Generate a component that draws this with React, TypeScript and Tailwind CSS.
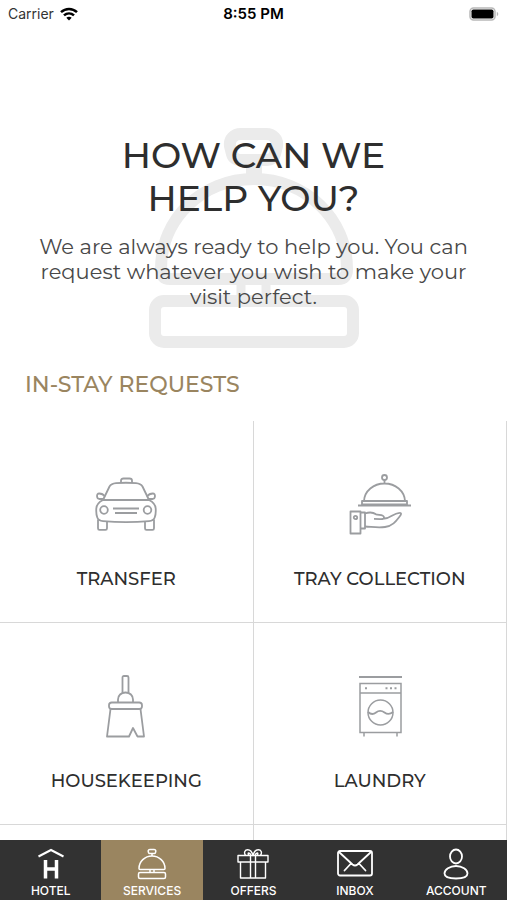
import React from 'react';

type IconProps = { className?: string };

const WifiIcon: React.FC<IconProps> = ({ className }) => (
  <svg viewBox="0 0 18 14" className={className} fill="none" stroke="currentColor" strokeWidth="2.500" aria-hidden="true">
    <path d="M1 5.2c4.600-4.300 11.400-4.300 16 0" />
    <path d="M4 8.400c2.900-2.700 7.100-2.700 10 0" />
    <path d="M6.300 10.800c1.500-1.400 3.900-1.400 5.400 0L9 13.600z" fill="currentColor" stroke="none" />
  </svg>
);

const BatteryIcon: React.FC<IconProps> = ({ className }) => (
  <svg viewBox="0 0 30 14" className={className} aria-hidden="true">
    <rect x="1" y="1" width="25" height="12" rx="3.500" fill="#fff" stroke="#b8b8b8" strokeWidth="1.500" />
    <rect x="2.500" y="2.500" width="22" height="9" rx="1.800" fill="#000" />
    <path d="M27.800 4.800c2 .8 2 3.600 0 4.400z" fill="#b8b8b8" />
  </svg>
);

const BellWatermark: React.FC<IconProps> = ({ className }) => (
  <svg viewBox="0 0 210 222" className={className} fill="none" stroke="#ebebeb" strokeWidth="12" aria-hidden="true">
    <path d="M92 7h25c7 0 12 5 11 12l-2 8c-1 4-4 6-8 6H91c-4 0-7-2-8-6l-2-8c-1-7 4-12 11-12z" />
    <path d="M105 33v18" strokeWidth="16" />
    <path d="M12 142c0-50 41-90 93-90s93 40 93 90c0 7-3 10-9 10H21c-6 0-9-3-9-10z" />
    <path d="M92 156v14M117 156v14" strokeWidth="9" />
    <rect x="6" y="174" width="198" height="41" rx="9" />
  </svg>
);

const TaxiIcon: React.FC<IconProps> = ({ className }) => (
  <svg viewBox="0 0 64 56" className={className} fill="none" stroke="currentColor" strokeWidth="1.800" strokeLinejoin="round" aria-hidden="true">
    <path d="M27 6V3.500C27 2 28 1.500 29.500 1.500h6C37 1.500 38 2 38 3.500V6" />
    <path d="M9 23l6.500-13.500C17 7 19 6.500 22 6.200c7-.6 13-.6 20 0 3 .3 5 .8 6.500 3.300L55 23z" />
    <path d="M9 22H5.500C2.500 22 2 16.500 5.200 16.500c2.300 0 4.500 1.200 5.800 3M55 22h3.500c3 0 3.500-5.500.3-5.500-2.300 0-4.500 1.200-5.800 3" />
    <path d="M9 23c-4 2-6.500 4.500-6.700 8.500C2 36 2.300 38 3.300 40.500 4.200 43 6 43.800 9 44.100c15 1.400 31 1.400 46 0 3-.3 4.800-1.100 5.700-3.600 1-2.500 1.300-4.500 1-9C61.500 27.500 59 25 55 23" />
    <circle cx="10" cy="33" r="3.800" />
    <circle cx="53.500" cy="33" r="3.800" />
    <path d="M19 31.500h26M21 36h22" />
    <path d="M4 42.500v8.700c0 1 .5 1.600 1.500 1.600h6c1 0 1.500-.6 1.500-1.600v-7M60 42.500v8.700c0 1-.5 1.600-1.500 1.600h-6c-1 0-1.500-.6-1.500-1.600v-7" />
  </svg>
);

const TrayIcon: React.FC<IconProps> = ({ className }) => (
  <svg viewBox="0 0 64 64" className={className} fill="none" stroke="currentColor" strokeWidth="1.800" strokeLinejoin="round" aria-hidden="true">
    <circle cx="36.500" cy="4.500" r="2.500" />
    <path d="M36.500 7v3M16 28c.5-10 9.500-17.500 20.500-17.500S56.500 18 57 28" />
    <path d="M14 28h45v3.500H14zM10 32.500h53" />
    <path d="M2.500 38.500h10v22h-10zM12.500 39.500H17v16h-4.500" />
    <circle cx="7.500" cy="44.500" r="1.700" />
    <path d="M17 40.500c5-1.800 8.500-1 11 .8 3 1 7.500-.3 8 2.900.3 2-1.500 2-4 1.900l-6-.2M36 45.500c6 .5 9-5.200 15.500-5.700 2-.2 2 1.200.5 3.200-3.500 4.500-7 10-15 11-7.500.9-13-.2-20-.5" />
  </svg>
);

const BroomIcon: React.FC<IconProps> = ({ className }) => (
  <svg viewBox="0 0 42 64" className={className} fill="none" stroke="currentColor" strokeWidth="1.800" strokeLinejoin="round" aria-hidden="true">
    <path d="M17.500 17.500V2.500c0-1 .5-1.500 1.500-1.500h3c1 0 1.500.5 1.500 1.500v15" />
    <path d="M13 27.500v-3c0-4 3-7 7.500-7s7.500 3 7.500 7v3" />
    <rect x="4" y="27.500" width="33" height="6.500" rx="2.800" />
    <path d="M5.500 34L2 61.500h22l4-8.500 4.500 8.500H39L35.500 34" />
  </svg>
);

const WasherIcon: React.FC<IconProps> = ({ className }) => (
  <svg viewBox="0 0 46 64" className={className} fill="none" stroke="currentColor" strokeWidth="1.500" aria-hidden="true">
    <path d="M2 2h43" strokeWidth="1.800" />
    <path d="M3 8.500h41v49H3zM3 18h41M7 57.500v4M40 57.500v4" />
    <circle cx="23.500" cy="37.500" r="12.500" />
    <path d="M11 37c3 2.800 5.500 2.500 8 .5 2.800-2.300 5.500-2.300 8.500 0 3 2.200 5.500 2 8.500-.5" strokeWidth="1.800" />
    <path d="M8 13.200h2M28.500 13.200h2M33 13.200h2M37.500 13.200h2" strokeWidth="2" />
  </svg>
);

const HotelIcon: React.FC<IconProps> = ({ className }) => (
  <svg viewBox="0 0 36 32" className={className} fill="none" stroke="currentColor" strokeWidth="2" aria-hidden="true">
    <path d="M5.500 8.500L18 2l12.500 6.500" />
    <path d="M12.500 12v18.500M23.500 12v18.500M12.500 21h11" strokeWidth="3.500" />
  </svg>
);

const BellIcon: React.FC<IconProps> = ({ className }) => (
  <svg viewBox="0 0 36 32" className={className} fill="none" stroke="currentColor" strokeWidth="1.500" strokeLinejoin="round" aria-hidden="true">
    <path d="M16 1.500h4c1.200 0 2 .8 1.800 1.800l-.3 1.200c-.2.700-.7 1-1.400 1h-4.200c-.7 0-1.200-.3-1.400-1l-.3-1.200c-.2-1 .6-1.800 1.800-1.800zM18 5.500v2.500" />
    <path d="M5 20.500C5 13.500 10.800 8 18 8s13 5.500 13 12.500c0 .7-.4 1-1 1H6c-.6 0-1-.3-1-1zM16 21.500v3M20 21.500v3" />
    <rect x="4.500" y="24.500" width="27" height="6" rx="1.500" />
  </svg>
);

const GiftIcon: React.FC<IconProps> = ({ className }) => (
  <svg viewBox="0 0 36 32" className={className} fill="none" stroke="currentColor" strokeWidth="1.400" strokeLinejoin="round" aria-hidden="true">
    <path d="M3 7.500h30v6.500H3zM5.500 14h25v16h-25zM15.500 7.500V30M20.500 7.500V30" />
    <path d="M10.500 7.500C8.500 4.500 10 1.700 12.700 1.700c2.800 0 4.500 2.800 5.300 5.800.8-3 2.500-5.800 5.300-5.800 2.700 0 4.200 2.800 2.200 5.800M14 7.500c-1.200-1.300-1-2.500-.2-2.500s1.700 1 2.200 2.500M22 7.500c1.200-1.300 1-2.500.2-2.500s-1.700 1-2.200 2.500" />
  </svg>
);

const MailIcon: React.FC<IconProps> = ({ className }) => (
  <svg viewBox="0 0 36 32" className={className} fill="none" stroke="currentColor" strokeWidth="1.800" strokeLinecap="round" strokeLinejoin="round" aria-hidden="true">
    <rect x="1" y="3" width="34" height="24.500" rx="2" />
    <path d="M2 4L15.500 16.500c1.800 1.500 3.200 1.500 5 0L34 4M7.500 22.500l6.500-7M28.500 22.500l-6.500-7" />
  </svg>
);

const AccountIcon: React.FC<IconProps> = ({ className }) => (
  <svg viewBox="0 0 36 32" className={className} fill="none" stroke="currentColor" strokeWidth="1.800" aria-hidden="true">
    <ellipse cx="18" cy="8.500" rx="6" ry="7" />
    <path d="M18 18c6.200 0 11.500 3.800 11.500 7.500S24.500 30.500 18 30.500 6.500 29.200 6.500 25.500 11.800 18 18 18z" />
  </svg>
);

const requests = [
  { label: 'TRANSFER', icon: <TaxiIcon className="w-16 h-14" /> },
  { label: 'TRAY COLLECTION', icon: <TrayIcon className="size-16" /> },
  { label: 'HOUSEKEEPING', icon: <BroomIcon className="w-[42px] h-16" /> },
  { label: 'LAUNDRY', icon: <WasherIcon className="w-[46px] h-16" /> }
];

const tabs = [
  { label: 'HOTEL', Icon: HotelIcon },
  { label: 'SERVICES', Icon: BellIcon },
  { label: 'OFFERS', Icon: GiftIcon },
  { label: 'INBOX', Icon: MailIcon },
  { label: 'ACCOUNT', Icon: AccountIcon }
];

const App: React.FC = () => {
  const activeTab = 'SERVICES';

  return (
    <div className="h-screen flex flex-col bg-white font-[Montserrat,Inter,sans-serif] text-[#2e2e2e]">
      <header className="grid grid-cols-3 items-center h-7 px-2 shrink-0 font-[Inter,sans-serif] text-sm text-black">
        <div className="flex items-center gap-1.5 text-[#333]">
          <span>Carrier</span>
          <WifiIcon className="w-[18px] h-3.5 text-black" />
        </div>
        <span className="text-center text-[15px] font-semibold">8:55 PM</span>
        <BatteryIcon className="w-[30px] h-3.5 justify-self-end" />
      </header>

      <main className="flex-1 min-h-0 overflow-y-auto [scrollbar-width:none]">
        <section className="relative isolate pt-[106px] px-6 text-center">
          <BellWatermark className="absolute -z-10 top-[99px] left-1/2 -translate-x-1/2 w-[210px] h-[222px]" />
          <h1 className="text-4xl leading-[43px] font-medium">
            HOW CAN WE
            <br />
            HELP YOU?
          </h1>
          <p className="mx-auto mt-3.5 max-w-[440px] text-[21px] leading-[25px] text-[#484848]">
            We are always ready to help you. You can request whatever you wish to make your visit perfect.
          </p>
        </section>

        <h2 className="mt-[62px] pl-[25px] text-[22px] leading-7 font-medium text-[#9a8560]">IN-STAY REQUESTS</h2>

        {/* Request tiles */}
        <div className="mt-[22px] grid grid-cols-2">
          {requests.map((item) => (
            <button
              key={item.label}
              type="button"
              className="h-[202px] pt-[52px] flex flex-col items-center border-r border-b border-[#d8d8d8]"
            >
              <span className="h-16 flex items-center text-[#9b9da0]">{item.icon}</span>
              <span className="mt-[30px] text-lg leading-6 font-medium">{item.label}</span>
            </button>
          ))}
          <div className="h-[202px] border-r border-b border-[#d8d8d8]" />
          <div className="h-[202px] border-r border-b border-[#d8d8d8]" />
        </div>
      </main>

      <nav className="grid grid-cols-5 h-[60px] shrink-0 bg-[#323232] text-white font-[Inter,sans-serif]">
        {tabs.map(({ label, Icon }) => (
          <button
            key={label}
            type="button"
            aria-current={label === activeTab ? 'page' : undefined}
            className={`flex flex-col items-center pt-2 ${label === activeTab ? 'bg-[#9a8560]' : ''}`}
          >
            <Icon className="w-9 h-8" />
            <span className="mt-[3px] text-xs leading-4 font-medium">{label}</span>
          </button>
        ))}
      </nav>
    </div>
  );
};

export default App;
